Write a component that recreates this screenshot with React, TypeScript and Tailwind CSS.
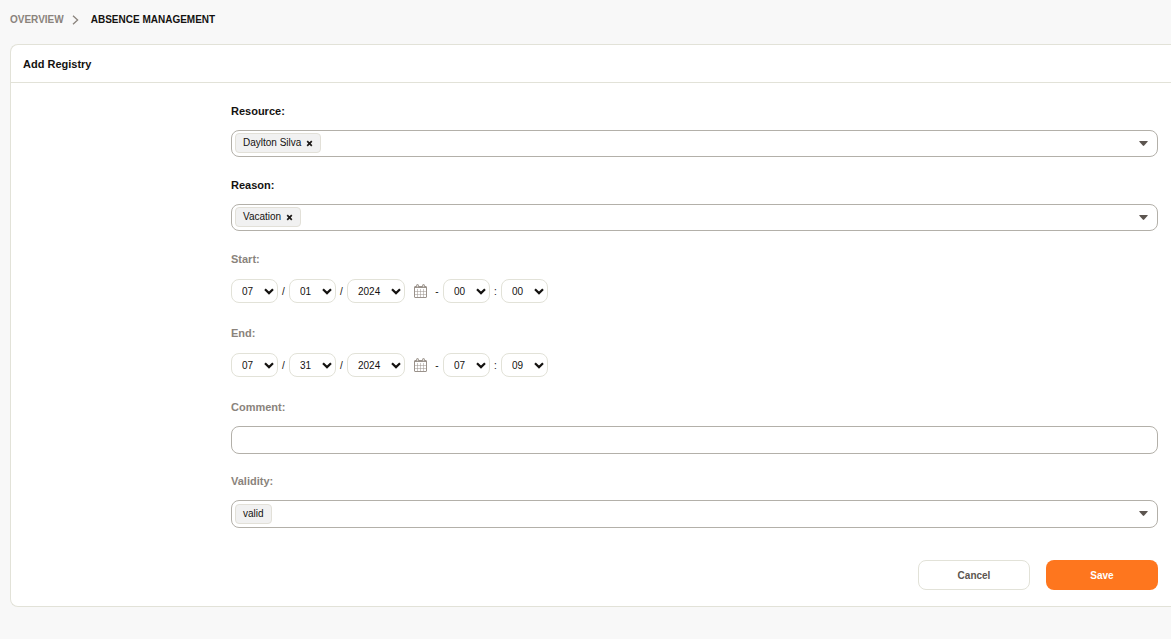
import React, { useState } from 'react';

interface FieldProps {
  id: string;
  label: string;
  required?: boolean;
  children: React.ReactNode;
}

interface TagSelectProps {
  id: string;
  options: string[];
  initial: string;
  clearable?: boolean;
}

interface NumberSelectProps {
  id?: string;
  label: string;
  value: string;
  options: string[];
  wide?: boolean;
}

interface DateTimeRowProps {
  id: string;
  name: string;
  month: string;
  day: string;
  year: string;
  hour: string;
  minute: string;
}

const range = (from: number, to: number) =>
  Array.from({ length: to - from + 1 }, (_, i) => String(from + i).padStart(2, '0'));

const MONTHS = range(1, 12);
const DAYS = range(1, 31);
const YEARS = range(2020, 2030);
const HOURS = range(0, 23);
const MINUTES = range(0, 59);

const CalendarIcon = () => (
  <svg className="w-[13px] h-[14px]" viewBox="0 0 13 14" fill="none" stroke="#9a928b">
    <rect x="0.5" y="2.5" width="12" height="11" rx="0.5" />
    <path d="M0.5 3.5h12" />
    <path d="M3.5 5v8.5M6.5 5v8.5M9.5 5v8.5M1 7.5h11M1 10.5h11" strokeOpacity="0.5" />
    <rect x="2.5" y="0.5" width="2" height="3" rx="1" fill="#d8d4d0" />
    <rect x="8.5" y="0.5" width="2" height="3" rx="1" fill="#d8d4d0" />
  </svg>
);

const Field: React.FC<FieldProps> = ({ id, label, required, children }) => (
  <div>
    <label htmlFor={id} className={`block w-fit text-[11px] leading-4 font-bold ${required ? 'text-[#141210]' : 'text-[#8a837c]'}`}>
      {label}
    </label>
    <div className="mt-[11px] h-7">{children}</div>
  </div>
);

const TagSelect: React.FC<TagSelectProps> = ({ id, options, initial, clearable }) => {
  const [value, setValue] = useState(initial);

  return (
    <div className={`relative flex items-center pl-[3px] border border-[#b3b0a9] rounded-lg bg-white ${clearable ? 'h-[27px] pb-px' : 'h-7'}`}>
      {value && (
        <span className="flex items-center h-5 px-[7px] border border-[#e2e0d8] rounded bg-[#f1f1f1] text-[10px] leading-4 whitespace-nowrap">
          {value}
          {clearable && (
            <button type="button" aria-label={`Remove ${value}`} onClick={() => setValue('')} className="ml-[5px] pt-px">
              <svg className="w-[7px] h-[7px]" viewBox="0 0 7 7" fill="none" stroke="#1d1a18" strokeWidth="1.7"><path d="M1.2 1.2l4.6 4.6M5.8 1.2l-4.6 4.6" /></svg>
            </button>
          )}
        </span>
      )}
      <select id={id} value="" onChange={e => setValue(e.target.value)} className="flex-1 h-full appearance-none bg-transparent outline-none text-[10px]">
        <option value=""></option>
        {options.map(o => <option key={o} value={o}>{o}</option>)}
      </select>
      <svg className="absolute right-[9px] top-[10px] w-[9px] h-[5px] pointer-events-none" viewBox="0 0 9 5" fill="#5c5550"><path d="M0.8 0h7.4q0.9 0 0.4 0.7L5.2 4.6q-0.7 0.7-1.4 0L0.4 0.7Q-0.1 0 0.8 0z" /></svg>
    </div>
  );
};

const NumberSelect: React.FC<NumberSelectProps> = ({ id, label, value, options, wide }) => (
  <div className="relative">
    <select
      id={id}
      aria-label={label}
      defaultValue={value}
      className={`block h-6 pl-[10px] appearance-none border border-[#e2e2d8] rounded-lg bg-white text-[10px] outline-none ${wide ? 'w-[58px]' : 'w-[47px]'}`}
    >
      {options.map(o => <option key={o}>{o}</option>)}
    </select>
    <svg className="absolute right-1 top-[9px] w-[10px] h-[7px] pointer-events-none" viewBox="0 0 10 7" fill="none" stroke="#141210" strokeWidth="2.2"><path d="M1 1.2l4 3.9 4-3.9" /></svg>
  </div>
);

const DateTimeRow: React.FC<DateTimeRowProps> = ({ id, name, month, day, year, hour, minute }) => (
  <div className="flex items-center pt-px text-[10px]">
    <NumberSelect id={id} label={`${name} month`} value={month} options={MONTHS} />
    <span className="w-[11px] text-center">/</span>
    <NumberSelect label={`${name} day`} value={day} options={DAYS} />
    <span className="w-[11px] text-center">/</span>
    <NumberSelect label={`${name} year`} value={year} options={YEARS} wide />
    <button type="button" aria-label={`Pick ${name} date`} className="ml-[9px]">
      <CalendarIcon />
    </button>
    <span className="w-4 pl-1 text-center">-</span>
    <NumberSelect label={`${name} hour`} value={hour} options={HOURS} />
    <span className="w-[11px] text-center">:</span>
    <NumberSelect label={`${name} minute`} value={minute} options={MINUTES} />
  </div>
);

const App: React.FC = () => {
  const [comment, setComment] = useState('');

  return (
    <div className="min-h-screen bg-[#f8f8f8] pl-[10px] pb-8 overflow-x-hidden font-['Liberation_Sans',Arial,sans-serif] text-[#141210]">
      <nav className="flex items-center h-11 pb-[5px] text-[10px] font-bold">
        <a href="#overview" className="text-[#8a837c]">OVERVIEW</a>
        <svg className="ml-2 w-[7px] h-[10px]" viewBox="0 0 7 10" fill="none" stroke="#8a837c" strokeWidth="1.3"><path d="M1 0.8l4.6 4.2L1 9.2" /></svg>
        <span className="ml-3">ABSENCE MANAGEMENT</span>
      </nav>

      <section className="bg-white border border-r-0 border-[#e2e2d8] rounded-l-lg">
        <h1 className="h-[38px] pl-3 border-b border-[#e2e2d8] text-[11px] leading-[38px] font-bold">Add Registry</h1>

        <form className="pl-[220px] pr-[13px] pt-5 pb-4" onSubmit={e => e.preventDefault()}>
          <div className="flex flex-col gap-[19px]">
            <Field id="resource" label="Resource:" required>
              <TagSelect id="resource" initial="Daylton Silva" options={['Daylton Silva']} clearable />
            </Field>
            <Field id="reason" label="Reason:" required>
              <TagSelect id="reason" initial="Vacation" options={['Vacation']} clearable />
            </Field>
            <Field id="start" label="Start:">
              <DateTimeRow id="start" name="Start" month="07" day="01" year="2024" hour="00" minute="00" />
            </Field>
            <Field id="end" label="End:">
              <DateTimeRow id="end" name="End" month="07" day="31" year="2024" hour="07" minute="09" />
            </Field>
            <Field id="comment" label="Comment:">
              <input
                id="comment"
                type="text"
                value={comment}
                onChange={e => setComment(e.target.value)}
                className="block w-full h-7 px-2 border border-[#b3b0a9] rounded-lg bg-white text-[10px] outline-none"
              />
            </Field>
            <Field id="validity" label="Validity:">
              <TagSelect id="validity" initial="valid" options={['valid']} />
            </Field>
          </div>

          <div className="flex justify-end gap-4 mt-8 text-[10px] font-bold">
            <button type="button" className="w-28 h-[30px] border border-[#e2e2d8] rounded-lg bg-white text-[#5c5550]">Cancel</button>
            <button type="submit" className="w-28 h-[30px] rounded-lg bg-[#fe761e] text-white">Save</button>
          </div>
        </form>
      </section>
    </div>
  );
};

export default App;
